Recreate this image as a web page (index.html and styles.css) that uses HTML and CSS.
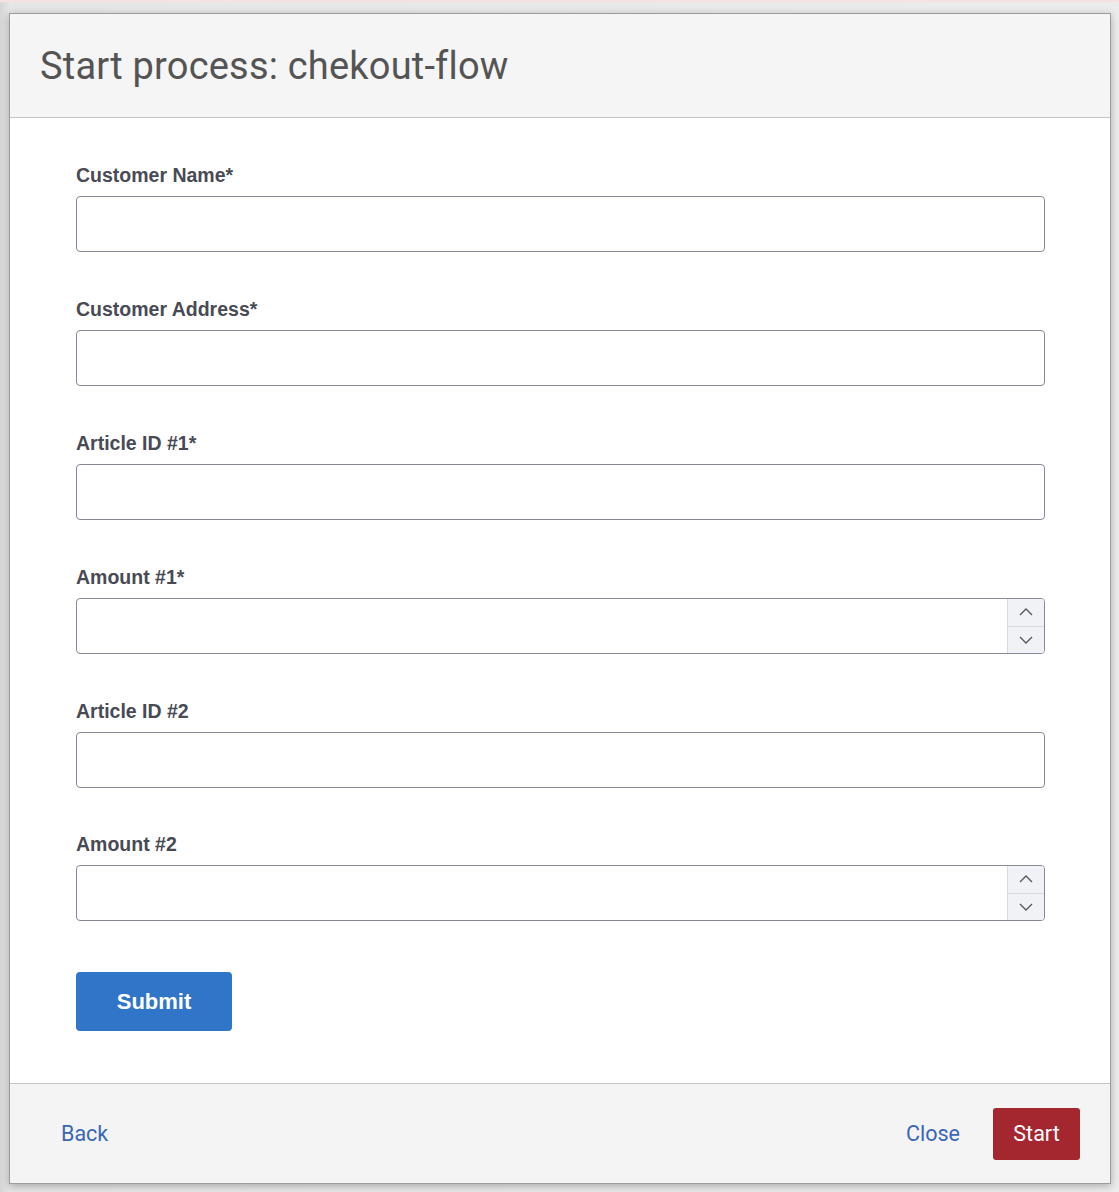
FILE: index.html
```html
<!DOCTYPE html>
<html lang="en">
<head>
<meta charset="utf-8">
<title>Start process</title>
<link rel="stylesheet" href="styles.css">
</head>
<body>
<div class="backdrop">
  <div class="modal">
    <header class="modal-header">
      <h1 class="modal-title">Start process: chekout-flow</h1>
    </header>
    <main class="modal-body">
      <form class="form">
        <div class="field">
          <label class="label">Customer Name*</label>
          <input class="input" type="text">
        </div>
        <div class="field">
          <label class="label">Customer Address*</label>
          <input class="input" type="text">
        </div>
        <div class="field">
          <label class="label">Article ID #1*</label>
          <input class="input" type="text">
        </div>
        <div class="field">
          <label class="label">Amount #1*</label>
          <div class="number">
            <input class="number-input" type="text">
            <div class="spinner">
              <span class="spin spin-up"><svg width="14" height="8" viewBox="0 0 14 8"><path d="M1 7 L7 1 L13 7" fill="none" stroke="#555" stroke-width="1.3"/></svg></span>
              <span class="spin"><svg width="14" height="8" viewBox="0 0 14 8"><path d="M1 1 L7 7 L13 1" fill="none" stroke="#555" stroke-width="1.3"/></svg></span>
            </div>
          </div>
        </div>
        <div class="field">
          <label class="label">Article ID #2</label>
          <input class="input" type="text">
        </div>
        <div class="field">
          <label class="label">Amount #2</label>
          <div class="number">
            <input class="number-input" type="text">
            <div class="spinner">
              <span class="spin spin-up"><svg width="14" height="8" viewBox="0 0 14 8"><path d="M1 7 L7 1 L13 7" fill="none" stroke="#555" stroke-width="1.3"/></svg></span>
              <span class="spin"><svg width="14" height="8" viewBox="0 0 14 8"><path d="M1 1 L7 7 L13 1" fill="none" stroke="#555" stroke-width="1.3"/></svg></span>
            </div>
          </div>
        </div>
        <button class="submit" type="button">Submit</button>
      </form>
    </main>
    <footer class="modal-footer">
      <button class="link" type="button">Back</button>
      <div class="footer-right">
        <button class="link" type="button">Close</button>
        <button class="primary" type="button">Start</button>
      </div>
    </footer>
  </div>
</div>
</body>
</html>
```

FILE: styles.css
```css
html, body {
  margin: 0;
  padding: 0;
}
body {
  background: linear-gradient(to right, #d6d6d6 0px, #e6e6e6 10px, #ececec 100%);
  border-top: 2px solid #f4e1e1;
  height: 1190px;
  overflow: hidden;
}
.backdrop {
  padding: 11px 0 0 9px;
}
.modal {
  width: 1102px;
  box-sizing: border-box;
  border: 1px solid #9c9c9c;
  background: #ffffff;
  box-shadow: 0 2px 8px rgba(0, 0, 0, 0.28);
}
.modal-header {
  height: 103px;
  background: #f5f5f5;
  border-bottom: 1px solid #c6c6c6;
  display: flex;
  align-items: center;
  padding-left: 30px;
}
.modal-title {
  margin: 0;
  font-family: Roboto, "Noto Sans", sans-serif;
  font-weight: 400;
  font-size: 38px;
  line-height: 40px;
  color: #545454;
  letter-spacing: 0.2px;
}
.modal-body {
  padding: 45px 65px 52px 66px;
}
.form {
  display: flex;
  flex-direction: column;
  gap: 45px;
}
.field {
  display: flex;
  flex-direction: column;
}
.field:nth-child(6) {
  margin-top: -1px;
}
.label {
  font-family: "Liberation Sans", Arial, sans-serif;
  font-weight: 700;
  font-size: 19.5px;
  line-height: 24px;
  color: #484a54;
  margin-bottom: 9px;
}
.input,
.number {
  height: 56px;
  box-sizing: border-box;
  border: 1px solid #878998;
  border-radius: 4px;
  background: #fff;
  width: 100%;
}
.input {
  padding: 0 12px;
  font: 18px "Liberation Sans", Arial, sans-serif;
  outline: none;
}
.number {
  display: flex;
  overflow: hidden;
}
.number-input {
  flex: 1;
  border: none;
  outline: none;
  padding: 0 12px;
  font: 18px "Liberation Sans", Arial, sans-serif;
  background: transparent;
}
.spinner {
  width: 36px;
  display: flex;
  flex-direction: column;
  border-left: 1px solid #d9dae0;
  background: #f1f2f5;
}
.spin {
  flex: 1;
  display: flex;
  align-items: center;
  justify-content: center;
}
.spin-up {
  border-bottom: 1px solid #d9dae0;
}
.submit {
  margin-top: 6px;
  align-self: flex-start;
  width: 156px;
  height: 59px;
  border: none;
  border-radius: 4px;
  background: #3175c8;
  color: #ffffff;
  font-family: "Liberation Sans", Arial, sans-serif;
  font-weight: 700;
  font-size: 22px;
  padding: 0;
}
.modal-footer {
  height: 99px;
  background: #f4f4f4;
  border-top: 1px solid #c6c6c6;
  display: flex;
  align-items: center;
  justify-content: space-between;
  padding: 0 30px;
}
.footer-right {
  display: flex;
  align-items: center;
  gap: 12px;
}
.link {
  background: none;
  border: none;
  padding: 0 21px;
  font-family: Roboto, "Noto Sans", sans-serif;
  font-size: 21.5px;
  color: #3a67b7;
  height: 52px;
}
.primary {
  width: 87px;
  height: 52px;
  border: none;
  border-radius: 3px;
  background: #a4262f;
  color: #ffffff;
  font-family: Roboto, "Noto Sans", sans-serif;
  font-size: 21.5px;
  padding: 0;
}
```
